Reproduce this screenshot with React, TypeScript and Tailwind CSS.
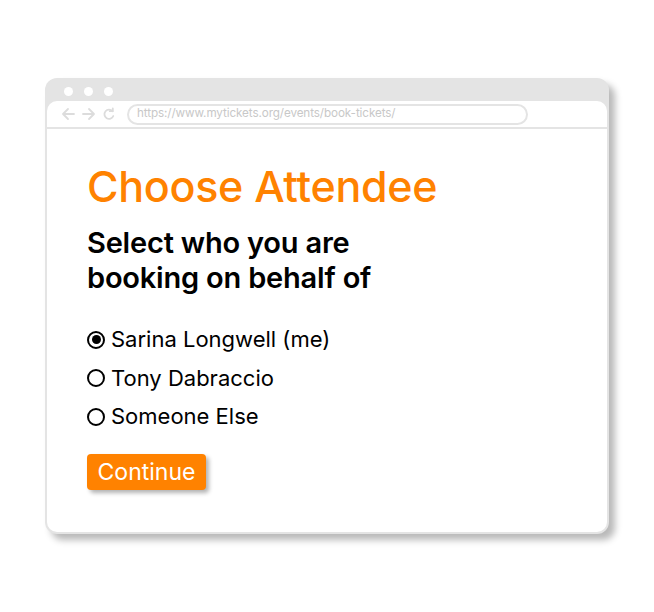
import React from "react";

const orange = "#ff8200";

function Radio({ checked }: { checked?: boolean }) {
  return (
    <span className="flex h-[18px] w-[18px] shrink-0 items-center justify-center rounded-full border-2 border-black">
      {checked && <span className="h-[9px] w-[9px] rounded-full bg-black" />}
    </span>
  );
}

export default function App() {
  const options = [
    { label: "Sarina Longwell (me)", checked: true },
    { label: "Tony Dabraccio" },
    { label: "Someone Else" },
  ];
  return (
    <div
      className="h-[612px] w-[654px] bg-white pl-[45px] pt-[78px]"
      style={{ fontFamily: "Inter, 'Noto Sans', sans-serif" }}
    >
      <div className="flex h-[456px] w-[564px] flex-col rounded-[12px] bg-[#e4e4e4] p-[2px] shadow-[6px_6px_7px_rgba(0,0,0,0.28)]">
        {/* window chrome: traffic dots */}
        <div className="flex h-[21px] items-center gap-[11px] pl-[17px] pt-[1px]">
          <span className="h-[9px] w-[9px] rounded-full bg-white" />
          <span className="h-[9px] w-[9px] rounded-full bg-white" />
          <span className="h-[9px] w-[9px] rounded-full bg-white" />
        </div>
        <div className="flex flex-1 flex-col rounded-[10px] bg-white">
          {/* toolbar */}
          <div className="flex h-[28px] items-center border-b-2 border-[#e4e4e4] pl-[14px]">
            <svg width="56" height="14" viewBox="0 0 56 14" fill="none" stroke="#dcdcdc" strokeWidth="1.8" strokeLinecap="round" strokeLinejoin="round">
              <path d="M2 7h11M7 2L2 7l5 5" />
              <path d="M22 7h11M28 2l5 5-5 5" />
              <path d="M51.5 4.2A4.6 4.6 0 1 0 52.3 9" />
              <path d="M48.8 4.2h3V1.4" />
            </svg>
            <div className="ml-[10px] flex h-[21px] w-[401px] items-center rounded-full border-2 border-[#e4e4e4] pl-[8px] text-[11.7px] tracking-[-0.1px] text-[#c8c8c8]">
              https://www.mytickets.org/events/book-tickets/
            </div>
          </div>
          {/* page body */}
          <div className="flex flex-col pl-[40px] pt-[33px]">
            <h1 className="text-[43px] font-medium leading-[48px] tracking-[-0.3px]" style={{ color: orange }}>
              Choose Attendee
            </h1>
            <p className="mt-[15px] text-[29px] font-semibold leading-[35px] tracking-[-0.2px] text-black">
              Select who you are
              <br />
              booking on behalf of
            </p>
            <div className="mt-[31px] flex flex-col gap-[11.5px]">
              {options.map((o) => (
                <label key={o.label} className="flex h-[27px] items-center gap-[6px] text-[22px] leading-[27px] text-black">
                  <Radio checked={o.checked} />
                  <span>{o.label}</span>
                </label>
              ))}
            </div>
            <button
              className="mt-[24px] flex h-[36px] w-[119px] items-center justify-center rounded-[4px] text-[23px] text-white shadow-[3px_3px_4px_rgba(0,0,0,0.3)]"
              style={{ backgroundColor: orange }}
            >
              Continue
            </button>
          </div>
        </div>
      </div>
    </div>
  );
}
